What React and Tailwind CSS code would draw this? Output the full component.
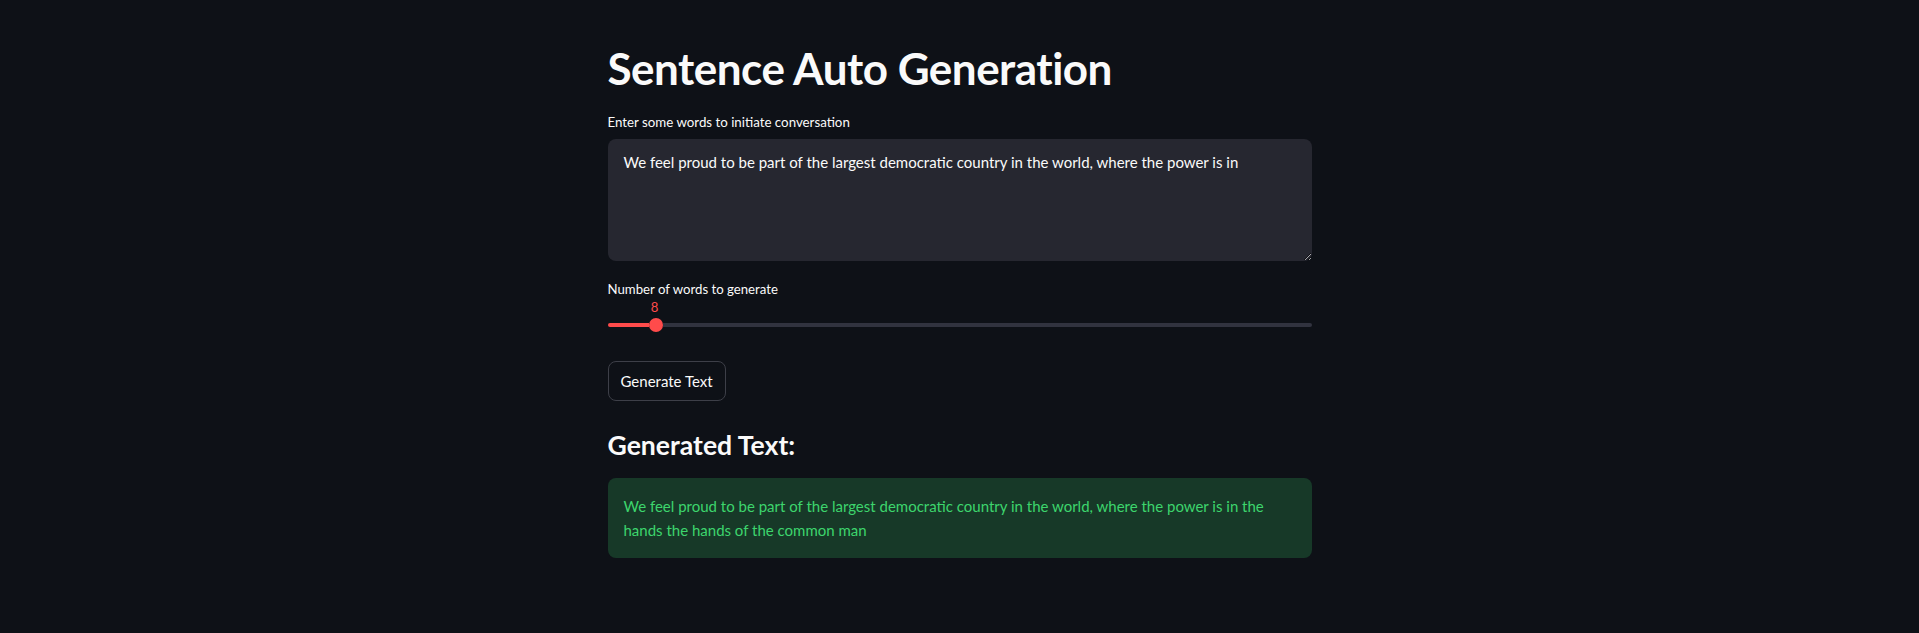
import React, { useState } from "react";

const initialPrompt =
  "We feel proud to be part of the largest democratic country in the world, where the power is in";

const generated =
  "We feel proud to be part of the largest democratic country in the world, where the power is in the hands the hands of the common man";

function WordSlider({ value }) {
  return (
    <div className="flex flex-col pb-[5px]">
      <span className="h-[19px] w-[94px] text-center text-[13.2px] leading-[17px] text-[#ff4b4b]">
        {value}
      </span>
      <div className="flex h-[14px] items-center">
        <div className="h-[4px] w-[41px] rounded-l-full bg-[#ff4b4b]" />
        <div className="h-[14px] w-[14px] shrink-0 rounded-full bg-[#ff4b4b]" />
        <div className="h-[4px] flex-1 rounded-r-full bg-[#31333f]" />
      </div>
    </div>
  );
}

function App() {
  const [prompt, setPrompt] = useState(initialPrompt);
  const [words] = useState(8);

  return (
    <div
      className="min-h-[633px] w-full bg-[#0e1117] text-[#fafafa]"
      style={{ fontFamily: "Lato, 'Noto Sans', sans-serif" }}
    >
      <div className="mx-auto flex w-[704px] flex-col pt-[42px]">
        <h1 className="text-[44px] font-bold leading-[53px] tracking-[-0.5px]">
          Sentence Auto Generation
        </h1>

        <label className="mt-[17px] block text-[13.3px] leading-[20px]">
          Enter some words to initiate conversation
        </label>
        <textarea
          value={prompt}
          onChange={(e) => setPrompt(e.target.value)}
          className="mt-[7px] block h-[122px] w-full resize-y rounded-lg bg-[#262730] px-4 py-[10px] text-[15px] leading-[26px] text-[#fafafa] outline-none"
        />

        <label className="mt-[18px] block text-[13.2px] leading-[20px]">
          Number of words to generate
        </label>
        <WordSlider value={words} />

        <div className="mt-[24px]">
          <button className="h-[40px] rounded-lg border border-[#3d3f48] bg-[#0e1117] px-[12px] text-[15px] leading-[24px]">
            Generate Text
          </button>
        </div>

        <h3 className="mt-[26px] text-[26.6px] font-bold leading-[36px]">
          Generated Text:
        </h3>
        <div className="mt-[15px] rounded-lg bg-[#173928] p-4 text-[15px] leading-[24px] text-[#3dd56d]">
          {generated}
        </div>
      </div>
    </div>
  );
}

export default App;
